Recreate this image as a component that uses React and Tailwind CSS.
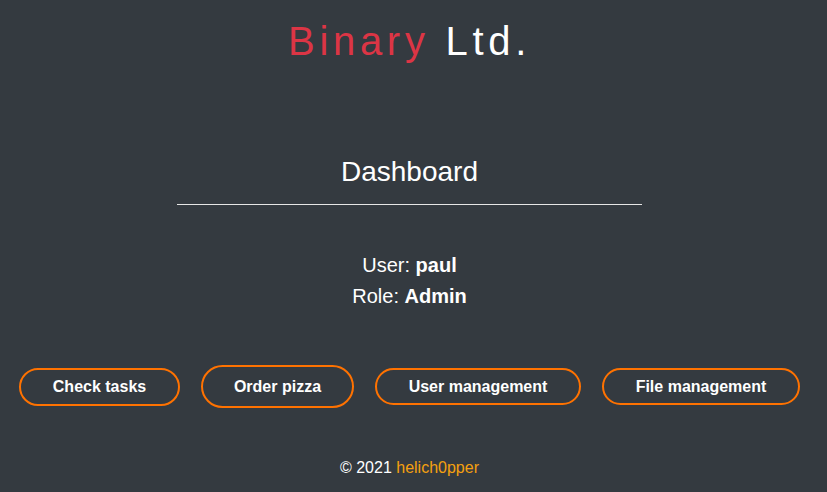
export default function App() {
  const btn =
    "border-2 border-[#ff7200] rounded-full text-white font-bold text-[16px] leading-6 bg-transparent text-center";
  return (
    <div
      className="min-h-screen w-full bg-[#343a40] pr-2 text-white"
      style={{ fontFamily: '"Liberation Sans", Arial, sans-serif' }}
    >
      <div className="flex flex-col items-center">
        <h1 className="pt-[17px] text-[40px] leading-[48px] tracking-[4.7px] font-normal text-center">
          <span className="text-[#dc3545]">Binary</span>{" "}
          <span className="text-white">Ltd.</span>
        </h1>
        <h2 className="mt-[90px] text-[28px] leading-[34px] font-normal">Dashboard</h2>
        <div className="mt-[15px] w-[465px] border-t border-[#e6e6e6]" />
        <div className="mt-[45px] text-[20px] leading-[31px] text-center">
          <p>
            User: <b>paul</b>
          </p>
          <p>
            Role: <b>Admin</b>
          </p>
        </div>
        <div className="mt-[53px] flex h-[43px] items-center justify-start gap-[21px] w-full pl-[19px]">
          <button className={`${btn} h-[38px] w-[161px]`}>Check tasks</button>
          <button className={`${btn} h-[43px] w-[153px]`}>Order pizza</button>
          <button className={`${btn} h-[37px] w-[206px]`}>User management</button>
          <button className={`${btn} h-[37px] w-[198px]`}>File management</button>
        </div>
        <footer className="mt-[48px] text-[16px] leading-6 text-center">
          © 2021 <span className="text-[#f5a00f]">helich0pper</span>
        </footer>
      </div>
    </div>
  );
}
